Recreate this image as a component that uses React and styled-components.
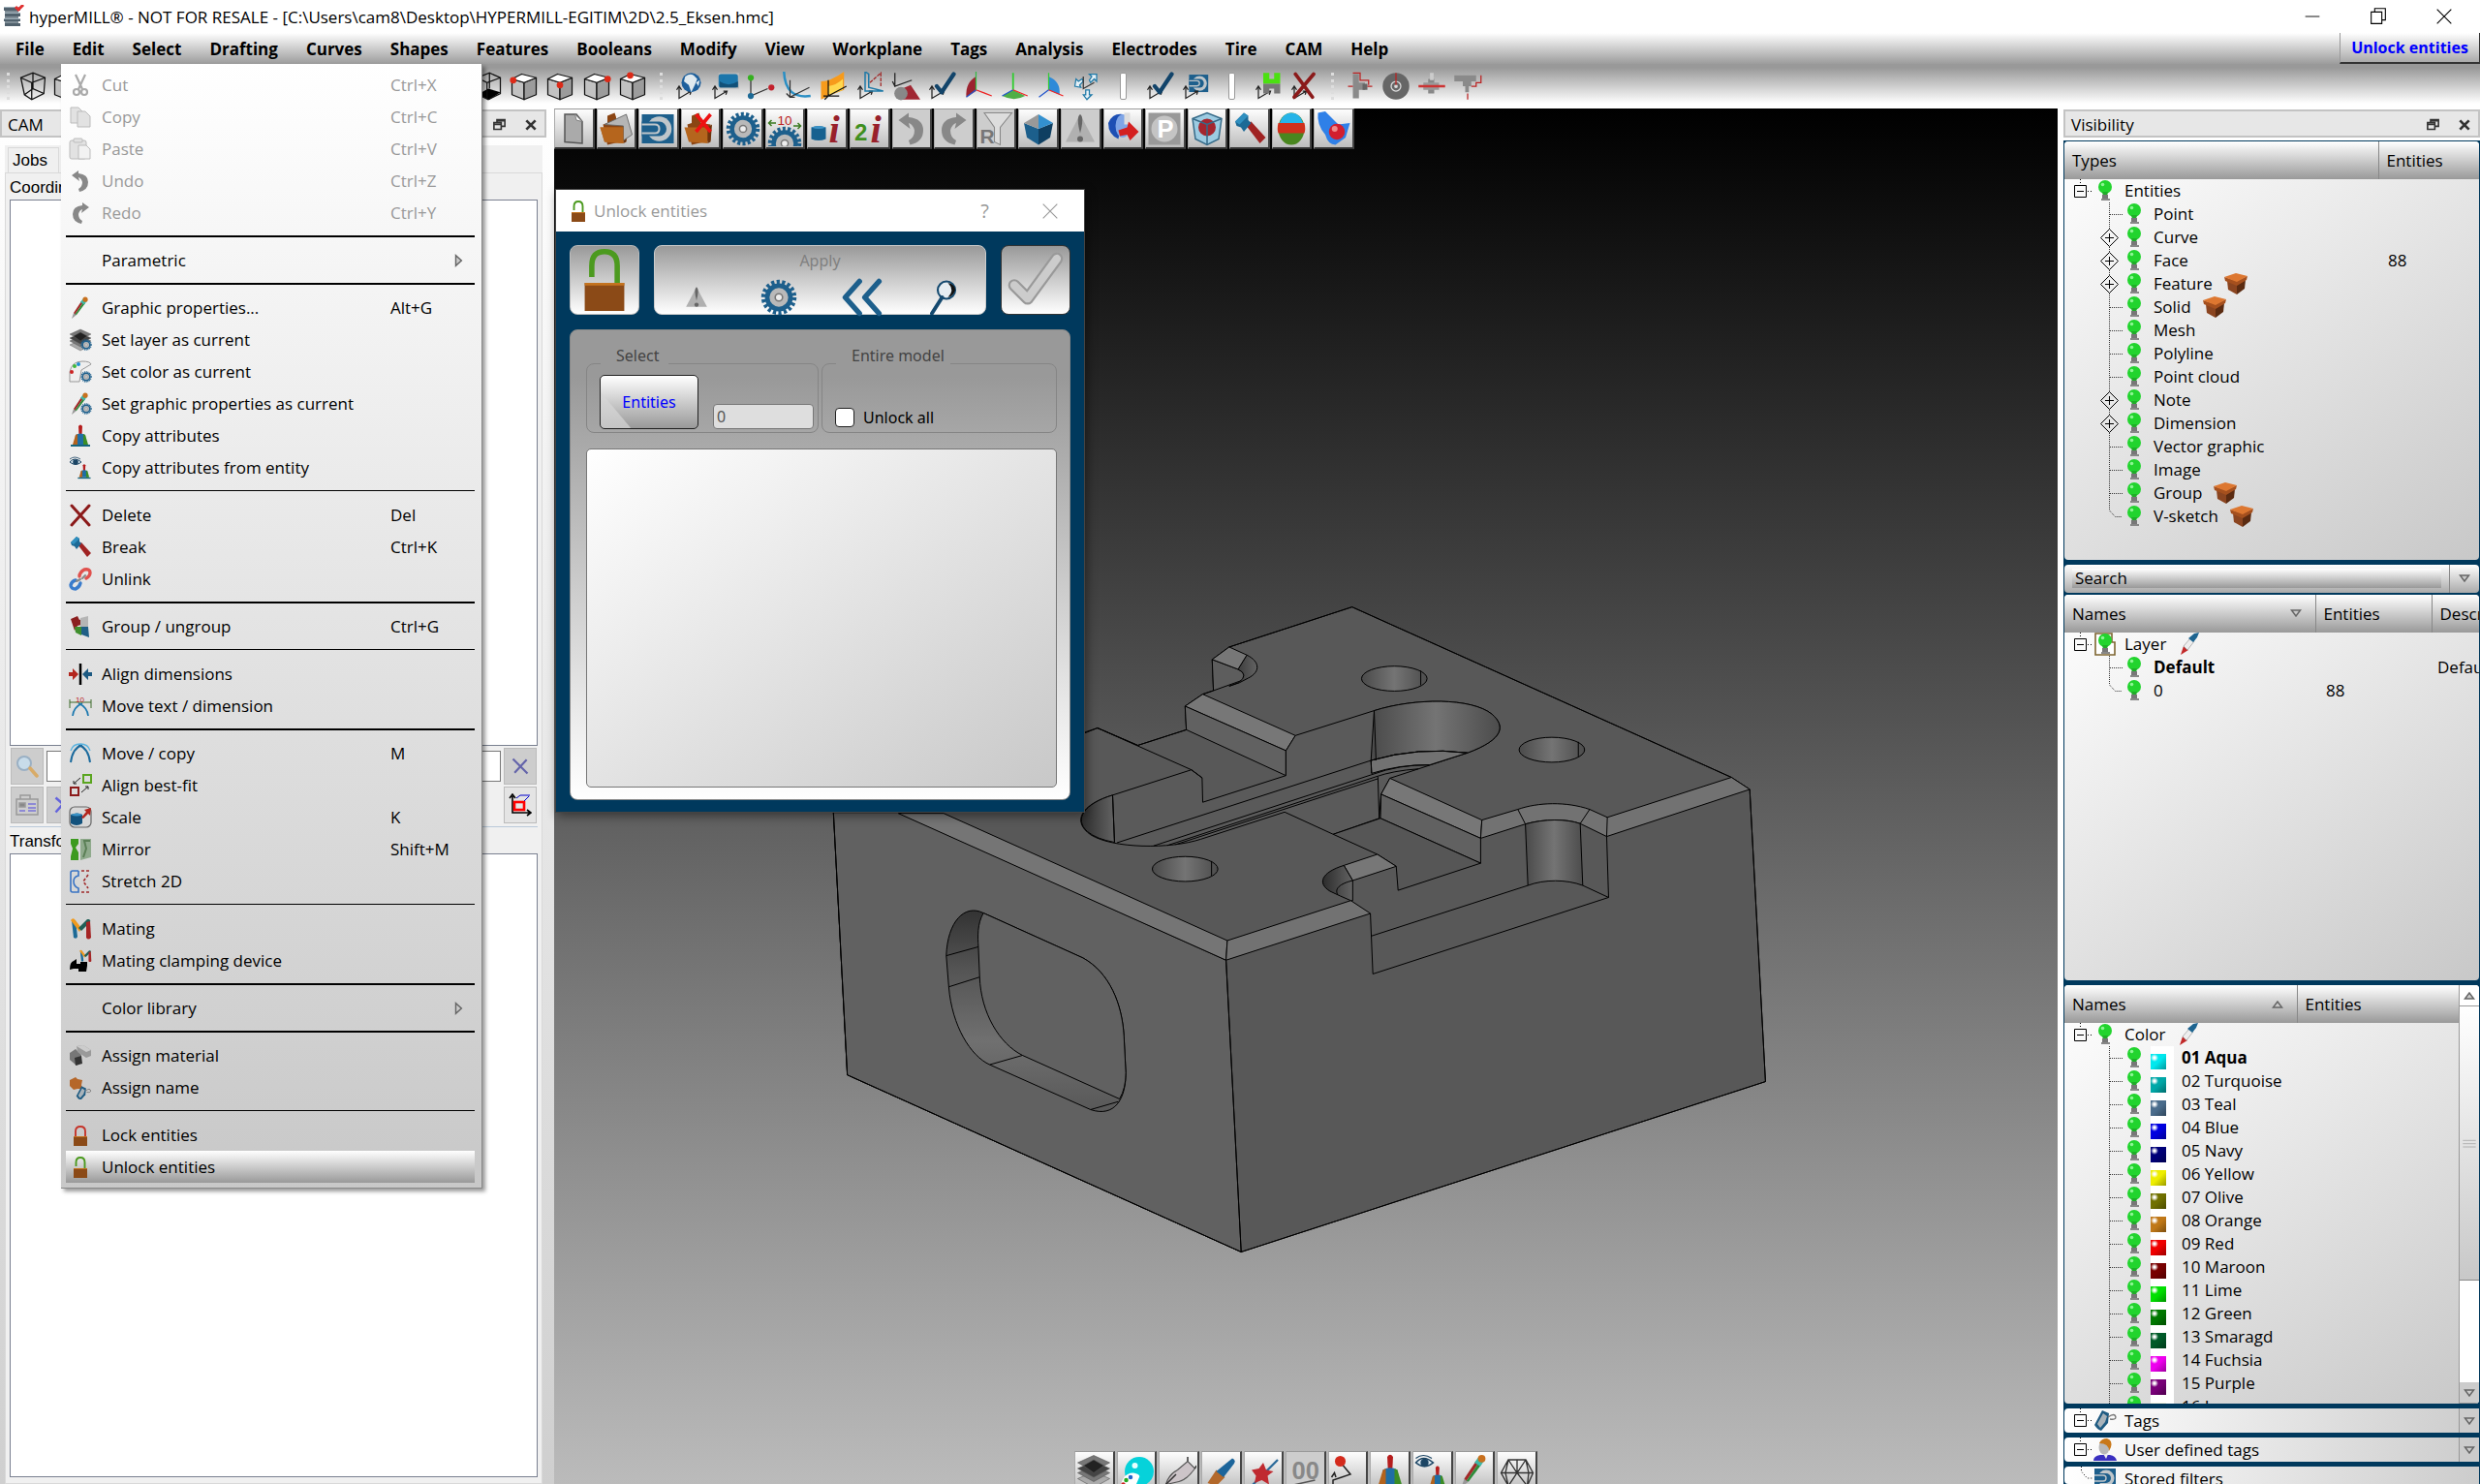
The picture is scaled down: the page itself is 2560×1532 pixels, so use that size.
import React from 'react';
import styled, { createGlobalStyle, css } from 'styled-components'

const uiFont = '"Open Sans", "Noto Sans", sans-serif'
const plainFont = '"Liberation Sans", Arial, sans-serif'
const navy = '#00395d'

const GlobalStyle = createGlobalStyle`
  * {
    box-sizing: border-box;
  }
  body {
    margin: 0;
    background: #fff;
    color: #000;
    font-family: ${uiFont};
    font-size: 17px;
    overflow: hidden;
  }
  button, input {
    font: inherit;
    color: inherit;
    margin: 0;
    padding: 0;
    border: 0;
    background: none;
  }
  svg {
    display: block;
    flex: none;
  }
`

const Page = styled.div`
  position: relative;
  height: 100vh;
  display: flex;
  flex-direction: column;
  overflow: hidden;
`

/* title bar, menu bar, top toolbar */
const TitleBar = styled.header`
  height: 34px;
  flex: none;
  display: flex;
  align-items: center;
  padding: 0 26px 0 2px;
  gap: 4px;
`
const WindowTitle = styled.h1`
  flex: 1;
  margin: 0;
  font-size: 17px;
  font-weight: 400;
`
const WindowButtons = styled.div`
  display: flex;
  gap: 46px;
`
const MenuBar = styled.nav`
  height: 32px;
  flex: none;
  display: flex;
  gap: 1px;
  background: linear-gradient(#fff, #9c9c9c);
  padding-left: 2px;
`
const MenuBarItem = styled.button`
  font-weight: 700;
  font-size: 17px;
  padding: 0 14px;
`
const CommandButton = styled.button`
  margin-left: auto;
  width: 145px;
  font-weight: 700;
  font-size: 16px;
  color: #00f;
  background: linear-gradient(#fff, #aaa);
  border-left: 1px solid #999;
  border-right: 1px solid #333;
  border-bottom: 2px solid #333;
`
const ToolBar = styled.div`
  height: 46px;
  flex: none;
  display: flex;
  align-items: center;
  background: linear-gradient(#999 4px, #fff 41px);
`
const ToolGroup = styled.div`
  display: grid;
  width: ${props => props.$width}px;
  grid-template-columns: repeat(${props => props.$count}, 1fr);
  justify-items: center;
  align-items: center;
`
const ToolButton = styled.button`
  display: flex;
`
const Grip = styled.div`
  width: 20px;
  display: flex;
  justify-content: center;
  &:first-child {
    width: 16px;
  }
  &::before {
    content: '';
    height: 28px;
    border-left: 3px dotted #ddd;
  }
`
const CoveredTools = styled.div`
  width: 398px;
`
const Bar = styled.div`
  width: 7px;
  height: 28px;
  border: 1px solid #999;
  border-radius: 2px;
  background: #fff;
`

const Workspace = styled.main`
  flex: 1;
  min-height: 0;
  display: grid;
  grid-template-columns: 572px minmax(0, 1fr) 436px;
`

/* docks */
const DockTitle = styled.div`
  height: 29px;
  flex: none;
  display: flex;
  align-items: center;
  gap: 18px;
  padding: 2px 7px 0 6px;
  background: #e7e7e7;
  border: 2px solid #c3c3c3;
  line-height: 22px;
`
const DockName = styled.h2`
  flex: 1;
  margin: 0;
  font-size: 17px;
  font-weight: 400;
`
const LeftDock = styled.aside`
  display: flex;
  flex-direction: column;
  min-height: 0;
  padding: 1px 8px 0 0;
  background: linear-gradient(#fff, #cfcfcf);
`
const TabBox = styled.div`
  flex: 1;
  min-height: 0;
  display: flex;
  flex-direction: column;
  margin: 8px 4px 0 5px;
  background: #f0f0f0;
  font-family: ${plainFont};
  font-size: 17px;
`
const Tab = styled.button`
  align-self: flex-start;
  width: 53px;
  height: 26px;
  margin: 2px 0 0 3px;
  padding-left: 4px;
  text-align: left;
  background: #f0f0f0;
  border: 1px solid #d9d9d9;
  border-bottom: 0;
`
const TabPane = styled.div`
  flex: 1;
  min-height: 0;
  display: flex;
  flex-direction: column;
  border: 1px solid #d9d9d9;
  padding: 2px 4px 6px;
`
const ListLabel = styled.label`
  height: 25px;
  line-height: 25px;
`
const ListBox = styled.div`
  flex: ${props => props.$share} 1 0;
  background: #fff;
  border: 1px solid #7a8090;
`
const FinderRow = styled.div`
  display: flex;
  gap: 3px;
  padding: 2px 1px 0;
`
const FinderInput = styled.input`
  flex: 1;
  margin: 3px 0;
  min-width: 0;
  background: #fff;
  border: 1px solid #777;
`
const FinderButton = styled.button`
  width: 34px;
  height: 38px;
  display: flex;
  align-items: center;
  justify-content: center;
  background: ${props => props.$active ? '#e4e4e4' : '#cdcdcd'};
  border: 1px solid #bbb;
  &:last-child {
    margin-left: auto;
  }
`
const Splitter = styled.div`
  height: 1px;
  margin: 3px 0 2px;
  background: #b9c9d9;
`

/* 3D view */
const View = styled.section`
  position: relative;
  display: flex;
  flex-direction: column;
  justify-content: space-between;
  background: linear-gradient(#000, #bbb);
  min-height: 0;
`
const ViewTools = styled.div`
  display: grid;
  grid-template-columns: repeat(${props => props.$count}, 1fr);
  gap: 2px;
  width: ${props => props.$width}px;
  ${props => props.$bottom && css`
    height: 34px;
    overflow: hidden;
    align-self: center;
  `}
`
const ViewButton = styled.button`
  height: 42px;
  min-width: 0;
  display: flex;
  align-items: center;
  justify-content: center;
  border: 1px solid;
  border-width: 1px 2px 2px 1px;
  border-color: #999 #444 #333 #aaa;
  background: ${props => props.$off ? '#cdcdcd' : 'linear-gradient(#fdfdfd, #bdbdbd)'};
`
const Model = styled.svg`
  position: absolute;
  left: 248px;
  top: 488px;
  width: 1020px;
  height: 720px;
  stroke: #000;
  stroke-width: 1;
  fill: none;
  & * {
    vector-effect: non-scaling-stroke;
  }
`

/* unlock entities window */
const Dialog = styled.section`
  position: absolute;
  left: 1px;
  top: 83px;
  width: 547px;
  border: 1px solid #444;
  background: ${navy};
  box-shadow: 2px 3px 10px rgba(0, 0, 0, 0.45);
`
const DialogTitle = styled.div`
  height: 43px;
  display: flex;
  align-items: center;
  gap: 4px;
  padding: 0 24px 0 11px;
  background: #fff;
  color: #999;
`
const DialogName = styled.h2`
  flex: 1;
  margin: 0;
  font-size: 17px;
  font-weight: 400;
`
const TitleButton = styled.button`
  display: flex;
  margin-left: 48px;
  font-size: 20px;
`
const DialogBody = styled.div`
  padding: 14px 14px 12px;
  display: flex;
  flex-direction: column;
  gap: 15px;
  font-family: "Noto Sans", sans-serif;
  font-size: 16px;
`
const DialogTop = styled.div`
  display: grid;
  grid-template-columns: 72px 1fr 72px;
  gap: 15px;
  height: 72px;
`
const RoundButton = styled.button`
  display: flex;
  align-items: center;
  justify-content: center;
  border: 1px solid ${props => props.$dark ? '#333' : '#bbb'};
  border-radius: 8px;
  background: linear-gradient(#999, #fff);
`
const ApplyBox = styled.div`
  border: 1px solid #ccc;
  border-radius: 8px;
  background: linear-gradient(#999, #fff);
  color: #808080;
  text-align: center;
  line-height: 31px;
`
const ApplyRow = styled.div`
  display: grid;
  grid-template-columns: repeat(4, 1fr);
  justify-items: center;
  align-items: center;
  height: 38px;
`
const Form = styled.div`
  border: 1px solid #888;
  border-radius: 8px;
  background: linear-gradient(#999 10%, #fff);
  padding: 16px 13px 12px 16px;
`
const Groups = styled.div`
  display: grid;
  grid-template-columns: 240px 1fr;
  gap: 3px;
`
const Group = styled.fieldset`
  position: relative;
  display: flex;
  align-items: flex-end;
  height: 90px;
  min-width: 0;
  margin: 0;
  padding: 0 5px 4px 14px;
  border: 0;
  gap: 15px;
  &::before {
    content: '';
    position: absolute;
    inset: 18px 0 0;
    border: 1px solid #858585;
    border-radius: 8px;
    pointer-events: none;
    clip-path: polygon(0 0, 15px 0, 15px 4px, ${props => props.$gapEnd}px 4px, ${props => props.$gapEnd}px 0, 100% 0, 100% 100%, 0 100%);
  }
`
const Legend = styled.legend`
  position: absolute;
  top: 0;
  left: 31px;
  padding: 0;
  line-height: 21px;
  color: #444;
`
const EntitiesButton = styled.button`
  width: 102px;
  height: 56px;
  color: #00f;
  border: 1px solid #222;
  border-radius: 5px;
  background: linear-gradient(50deg, rgba(215, 215, 215, 0.7) 21%, transparent 22%), linear-gradient(#fff, #999);
`
const CountInput = styled.input`
  flex: 1;
  min-width: 0;
  height: 26px;
  padding-left: 3px;
  color: #555;
  border: 1px solid #777;
  border-radius: 4px;
  background: #dedede;
`
const CheckLabel = styled.label`
  display: flex;
  align-items: center;
  gap: 9px;
  line-height: 24px;
`
const Check = styled.input`
  appearance: none;
  width: 20px;
  height: 20px;
  background: #fff;
  border: 1px solid #222;
  border-radius: 4px;
`
const Selection = styled.div`
  height: 350px;
  margin-top: 16px;
  border: 1px solid #777;
  border-radius: 5px;
  background: linear-gradient(145deg, #fff, #c8c8c8);
`

/* edit menu */
const Menu = styled.div`
  position: absolute;
  left: 63px;
  top: 66px;
  width: 435px;
  padding: 5px 7px 5px 5px;
  background: linear-gradient(#fff, #c8c8c8);
  border-right: 1px solid #888;
  border-bottom: 1px solid #888;
  box-shadow: 3px 3px 4px rgba(0, 0, 0, 0.4);
`
const MenuItem = styled.button`
  width: 100%;
  height: 33px;
  display: grid;
  grid-template-columns: 24px 308px 64px 1fr;
  align-items: center;
  padding-left: 3px;
  text-align: left;
  color: ${props => props.disabled ? '#999' : '#000'};
  background: ${props => props.$active ? 'linear-gradient(#fff, #999)' : 'none'};
`
const MenuText = styled.span`
  padding-left: 10px;
`
const MenuLine = styled.hr`
  height: ${props => props.$thin ? 1 : 2}px;
  margin: 7px 0 ${props => props.$thin ? 8 : 7}px;
  border: 0;
  background: #000;
`

/* visibility dock */
const RightDock = styled.aside`
  display: flex;
  flex-direction: column;
  min-height: 0;
  padding: 1px 0 0 6px;
`
const Panels = styled.div`
  flex: 1;
  min-height: 0;
  display: flex;
  flex-direction: column;
  gap: 5px;
  margin-top: 3px;
  padding: 1px 1px 0;
  background: ${navy};
`
const Panel = styled.div`
  flex: ${props => props.$share} 1 0;
  min-height: 0;
  display: flex;
  overflow: hidden;
  border-radius: 4px;
  background: linear-gradient(145deg, #fff, #c8c8c8);
`
const SearchGroup = styled.div`
  flex: 12 1 31px;
  min-height: 0;
  display: flex;
  flex-direction: column;
  gap: 2px;
`
const SearchRow = styled.div`
  height: 29px;
  flex: none;
  display: flex;
  align-items: center;
  padding-left: 8px;
  background: linear-gradient(#fff, #aaa);
  border-radius: 4px;
`
const SearchInput = styled.input`
  flex: 1;
  min-width: 0;
  height: 20px;
  padding-left: 3px;
  line-height: 20px;
  background: linear-gradient(#fff, #999);
`
const DropButton = styled.button`
  width: 31px;
  height: 100%;
  margin-left: 8px;
  display: flex;
  align-items: center;
  justify-content: center;
  border-left: 1px solid #888;
`
const Table = styled.table`
  flex: 1;
  width: 100%;
  align-self: flex-start;
  table-layout: fixed;
  border-collapse: collapse;
`
const Th = styled.th`
  width: ${props => props.$width ? props.$width + 'px' : 'auto'};
  height: 39px;
  padding: 0 14px 0 8px;
  font-weight: 400;
  text-align: left;
  white-space: nowrap;
  overflow: hidden;
  background: linear-gradient(#fff, #999);
  &:last-child {
    padding-right: 0;
  }
  & + & {
    border-left: 1px solid #888;
  }
`
const HeadCell = styled.div`
  display: flex;
  justify-content: space-between;
  align-items: center;
`
const Td = styled.td`
  height: 24px;
  padding: 0 0 0 ${props => props.$pad || 0}px;
  line-height: 24px;
  white-space: nowrap;
  overflow: hidden;
`
const TreeCell = styled.div`
  display: flex;
  align-items: center;
  height: 24px;
`
const TreeText = styled.span`
  padding: 0 12px 0 8px;
  font-weight: ${props => props.$bold ? 700 : 400};
`
const Swatch = styled.span`
  width: 24px;
  height: 24px;
  flex: none;
  margin-left: 5px;
  background: #fff;
  &::before {
    content: '';
    display: block;
    width: 16px;
    height: 16px;
    margin-top: 8px;
    background: radial-gradient(circle at 4px 4px, #fff 1px, transparent 4px),
      linear-gradient(135deg, ${props => props.$color} 50%, rgba(0, 0, 0, 0.35)) ${props => props.$color};
  }
`
const ScrollBar = styled.div`
  width: 21px;
  flex: none;
  display: flex;
  flex-direction: column;
  border-left: 1px solid #999;
  background: #fff;
`
const ScrollButton = styled.button`
  height: 22px;
  display: flex;
  align-items: center;
  justify-content: center;
  background: ${props => props.$down ? '#ccc' : '#fff'};
  border-bottom: 1px solid #999;
`
const ScrollTrack = styled.div`
  flex: 1;
`
const Thumb = styled.div`
  height: 73%;
  display: flex;
  align-items: center;
  justify-content: center;
  background: linear-gradient(#fff, #c8c8c8);
  border-bottom: 1px solid #888;
`
const FoldedRow = styled.div`
  height: ${props => props.$last ? 18 : 25}px;
  flex: none;
  overflow: hidden;
  display: flex;
  border-radius: 4px 0 0 4px;
  background: linear-gradient(100deg, #fff, #ccc);
  & > div {
    flex: 1;
  }
`
const FoldedButton = styled.button`
  width: 21px;
  display: flex;
  align-items: center;
  justify-content: center;
  background: #ccc;
  border-left: 1px solid #999;
`

const cube = (
  <g stroke="#111" strokeWidth="1" strokeLinejoin="round">
    <path d="M2 6v13l10 4V9z" fill="#c2c2c2" />
    <path d="M12 9v14l10-4V5z" fill="#9c9c9c" />
    <path d="M2 6l8-4 12 3-10 4z" fill="#fff" />
  </g>
)
const dotCube = (x, y) => <g>{cube}<circle cx={x} cy={y} r="2.700" fill="#dd2a18" /></g>
const axes = (
  <path d="M4 12v10l10-6M4 22v-9m-2 2l2-3 2 3m5 1l3 0-1 3" stroke="#222" fill="none" strokeWidth="1" />
)
const gear = (x, y, r, fill = '#1d5f8c') => (
  <g>
    <circle cx={x} cy={y} r={r} fill="none" stroke={fill} strokeWidth={r * 0.3} strokeDasharray={`${r * 0.2} ${r * 0.149}`} />
    <circle cx={x} cy={y} r={r * 0.76} fill="#b9b9b9" stroke={fill} strokeWidth={r * 0.3} />
    <circle cx={x} cy={y} r={r * 0.24} fill="#eee" stroke="#777" strokeWidth={r * 0.1} />
  </g>
)
const pencil = (
  <g>
    <path d="M3 23l2-6 3 2z" fill="#999" />
    <path d="M5 17l8-12 2 1-8.500 12.500z" fill="#a32a2a" />
    <path d="M6.500 18.500L15 6l2 1-9 12z" fill="#2e8b3a" />
    <path d="M12 6l2.500-3.500 4 2.500L16 8.500z" fill="#3fb8a8" />
    <circle cx="17" cy="3.200" r="2.600" fill="#c8701e" />
  </g>
)
const stamp = (
  <g>
    <path d="M10 2q2-3 4 0l-.5 9h-3z" fill="#b51d1d" />
    <path d="M7 11q5-3 10 0l1 10H6z" fill="#1f6ea5" />
    <path d="M7 11l2-1v11H4z" fill="#b3631d" />
    <path d="M17 11l-2-1v11h5z" fill="#3c8d25" />
    <path d="M2 21h20v2H2z" fill="#15657f" />
  </g>
)
const lock = (open) => (
  <g>
    <path d={open ? 'M7.500 11V7q0-5 4.500-5t4.500 5v6' : 'M7 13V8q0-5 5-5t5 5v5'} fill="none" stroke={open ? '#4c9a1f' : '#c5352b'} strokeWidth="1.900" />
    <path d="M5 13h14v10H5z" fill="#8b4a17" />
    <path d="M5 13h14v1H5z" fill="#c4731f" />
  </g>
)
const dbIcon = (
  <g>
    <path d="M1 2h22v20H1z" fill="#1d5f8c" />
    <circle cx="13" cy="12" r="8.500" fill="#bfc6ca" />
    <path d="M1 7h12a5 5 0 0 1 0 10H1z" fill="#1d5f8c" />
    <path d="M1 9h9q3 0 3 3t-3 3H1" fill="none" stroke="#bfc6ca" strokeWidth="1.400" />
  </g>
)
const folder = (
  <g>
    <path d="M3 9l3-1V3l5-2 1 3v4l7 1v11l-13 3z" fill="#8b4513" />
    <path d="M1 11h16v11l-13-1z" fill="#b5651d" />
    <path d="M17 11l3-2-1 12-2 1z" fill="#6d340d" />
  </g>
)
const hammer = (
  <g>
    <path d="M9 9l4-2 10 11-4 4z" fill="#a02323" />
    <path d="M2 7l6-6 3 2v3l2 2-5 6-2-3-3-1z" fill="#1d6a96" />
    <path d="M2 7l6-6 3 2-6 6z" fill="#2f8fbf" />
  </g>
)
const mating = (
  <g>
    <path d="M3 3l2 18q3 2 4-1L7 3z" fill="#1d6a96" />
    <path d="M2 3q2-3 4-1l7 9-2 4z" fill="#f09a1d" />
    <path d="M21 2q2 1 1 3l-9 9-3-3 9-9z" fill="#205f57" />
    <path d="M18 5l4-1 1 17q-3 3-5 0z" fill="#a52525" />
  </g>
)
const eye = (
  <g>
    <path d="M1 6q5-6 12 0-6 5-12 0z" fill="#dce8f0" stroke="#1c4564" strokeWidth="1" />
    <circle cx="7" cy="6" r="2.800" fill="#1c4564" />
    <path d="M1 3q5-4 11 0" fill="none" stroke="#1c4564" strokeWidth="0.800" />
  </g>
)
const check = <path d="M8 12l4 5L22 2" fill="none" stroke="#12446a" strokeWidth="3.400" strokeLinecap="round" strokeLinejoin="round" />
const cross = <path d="M3 2l18 20M21 2L3 22" stroke="#8b1a1a" strokeWidth="3" strokeLinecap="round" />
const arrowTurn = <path d="M3 6l7-5 0 3q10 1 10 9 0 8-9 10l-1-3q4-2 4-7-1-4-4-5l1 4z" fill="#888" />
const info = <text x="13" y="21" fontSize="27" fontStyle="italic" fontWeight="700" fill="#98202a" fontFamily="Liberation Serif">i</text>
const layers = (
  <g stroke="#555" strokeWidth="0.400">
    <path d="M12 12l11 5-11 6-11-6z" fill="#aaa" />
    <path d="M12 8l11 5-11 6-11-6z" fill="#777" />
    <path d="M12 5l11 5-11 6-11-6z" fill="#444" />
    <path d="M12 1l11 5-11 6L1 6z" fill="#777" />
    <path d="M12 4l7 4-7 5-7-5z" fill="#222" />
  </g>
)
const tagIcon = (
  <g>
    <path d="M1 17L9 2l7 3-1 10-7 8q-4-1-7-6z" fill="#1f5b82" />
    <path d="M4 16L10 5l4 3-2 6-5 6z" fill="#a9b3ba" />
    <path d="M15 9q7-5 8 0 0 3-6 2" fill="none" stroke="#777" strokeWidth="1.300" />
  </g>
)
const bulb = (
  <g>
    <circle cx="12" cy="8" r="7" fill="#22d42e" />
    <path d="M9 13h6l-1 4h-4z" fill="#1fae28" />
    <path d="M9 16h6v4H9z" fill="#777" />
    <path d="M8 20h9v2H8z" fill="#888" />
    <circle cx="9.500" cy="5.500" r="1.800" fill="#8cf592" />
  </g>
)

const icons = {
  app: <g><path d="M2 2h17v4H2zM3 8h16v4H3zM2 14h17v3H2zM3 19h16v3H3z" fill="#51616d" /><path d="M2 2h17v1H2zM3 8h16v1H3zM2 14h17v1H2z" fill="#9fb0ba" /><path d="M3 6h14v2H3zM3 12h14v2H3zM3 17h14v2H3z" fill="#7f8d96" /><path d="M14 2l3 3 5-5" fill="none" stroke="#e03030" strokeWidth="3" /></g>,
  wire: <g fill="none" stroke="#111" strokeWidth="1"><path d="M2 5l3 14 6 4 10-5 1-13-10-4zM2 5l9 4 11-4M11 9v14M12 1v13l9 4M12 14l-7 5" /></g>,
  solidCube: cube,
  floorCube: <g><path d="M3 19l9-5 10 3-9 6z" fill="#000" /><path d="M3 5l10-4 9 4v13l-10 5-8-4zM3 5l8 4 11-4M11 9v14M13 1v13" fill="none" stroke="#111" /></g>,
  cubeLeft: dotCube(3, 7),
  cubeMid: dotCube(12, 11),
  cubeRight: dotCube(21, 6),
  cubeTop: dotCube(10, 3),
  globe: <g>{axes}<circle cx="14" cy="9" r="8" fill="#1d5f9c" /><path d="M9 4q4-3 7-1l3 3-2 5-3 6-2-6-4-3zM18 9l3-2-1 5z" fill="#dfe9ef" /></g>,
  screen: <g>{axes}<rect x="7" y="1" width="17" height="13" fill="#bbb" /><rect x="7" y="2" width="16" height="11" rx="2" fill="#1b76ab" /><path d="M8 8q7 5 15 0v5H8z" fill="#115078" /></g>,
  points: <g><path d="M4 4v16l14-6" stroke="#333" fill="none" /><circle cx="4" cy="5" r="2.500" fill="#35b020" /><circle cx="21" cy="13" r="2.500" fill="#c3202c" /><circle cx="4" cy="20" r="2.500" fill="#1d6a96" /></g>,
  curve: <g><path d="M1 0q1 23 22 20" stroke="#2b8fc4" strokeWidth="2" fill="none" /><path d="M6 7v14l16-8M3 18l3 3h4" stroke="#333" fill="none" /></g>,
  orange: <g><path d="M2 8q8 0 19-8v15q-9 3-19 8z" fill="#f79b1c" /><path d="M8 12q7-1 12-6v9l-12 5z" fill="#ffd84f" /><path d="M8 7v13l15-8M5 23l4-4M4 20h13" stroke="#111" fill="none" /></g>,
  angle: <g>{axes}<path d="M8 0l3 2v11l12 3H8z" fill="none" stroke="#1f7aa8" strokeWidth="1.200" /><path d="M12 9l9-8v12" fill="none" stroke="#a02323" strokeDasharray="3 1" /></g>,
  cone: <g><path d="M3 1v11l14-5M3 12L1 8" stroke="#222" fill="none" /><path d="M9 14l7-3 8 12H9z" fill="#a02733" /><circle cx="8" cy="18" r="5.500" fill="#888" /></g>,
  checkAxes: <g>{axes}{check}</g>,
  planeRed: <g><path d="M10 4v12l-8 5q-1-12 8-17z" fill="#9c2430" /><path d="M10 15l13 5" stroke="#e22" /><path d="M10 15l-8 6" stroke="#25c" /><path d="M10 0v15" stroke="#3b4" /></g>,
  planeGreen: <g><path d="M2 20l9-5 10 5q-9 5-19 0z" fill="#4fae47" /><path d="M11 1v14" stroke="#3c3" strokeWidth="1.500" /><path d="M11 15l12 5" stroke="#e22" /><path d="M11 15l-9 5" stroke="#25c" /></g>,
  planeBlue: <g><path d="M10 4v11l9 4q1-11-9-15z" fill="#2e8ad8" /><path d="M10 1v14" stroke="#3c3" /><path d="M10 15l12 5" stroke="#e22" /><path d="M10 15l-8 6" stroke="#25c" /></g>,
  moveAxes: <g fill="#e8f2f8" stroke="#1f7aa8"><path d="M2 12l1-6 2 2 3-2 1 2-3 3 1 2zM14 2h6v6l-2-2-3 3-1-2 2-3zM11 15h3v4h2l-4 4-3-4h2z" /><path d="M9 4v10l9-5" stroke="#333" fill="none" /></g>,
  dbAxes: <g><g transform="translate(6 1) scale(.72)">{dbIcon}</g>{axes}</g>,
  save: <g>{axes}<path d="M8 1h5v5h4V1h5v9H8z" fill="#4be011" /><path d="M8 10h14v8h-5v-4h-4v4H8z" fill="#777" /></g>,
  delAxes: <g>{axes}<path d="M5 2l14 19M20 2L4 21" stroke="#8b1a1a" strokeWidth="3" strokeLinecap="round" /></g>,
  tire1: <g><path d="M6 2h5v7h5v6h-5v7H6z" fill="#8a8a8a" /><path d="M14 10h4v5h-4z" fill="#666" /><path d="M2 12h4M18 12h4M6 1h6v6h7v4" stroke="#b22" fill="none" /></g>,
  tire2: <g><circle cx="12" cy="12" r="11" fill="#666" /><circle cx="12" cy="12" r="4" fill="none" stroke="#ddd" /><circle cx="12" cy="12" r="1.500" fill="#ddd" /><path d="M12 1v10" stroke="#b22" /></g>,
  tire3: <g><path d="M9 6h5v12H9z" fill="#888" /><path d="M5 9h13v6H5z" fill="#999" /><path d="M1 12h22" stroke="#c33" strokeWidth="2" /><path d="M12 1v6" stroke="#ccc" strokeWidth="3" /></g>,
  tire4: <g><path d="M1 3h18v5h-4v4h-2v5h-3v-5H8V8H1z" fill="#8a8a8a" /><path d="M12 23v-5m3-6h4V9h4V3" stroke="#b22" fill="none" /></g>,
  cut: <g fill="none" stroke="#aaa" strokeWidth="2.200"><path d="M7 1l7 15M17 1l-7 15" /><circle cx="8" cy="19" r="3" /><circle cx="16" cy="19" r="3" /></g>,
  copy: <g fill="#e2e2e2" stroke="#bbb"><path d="M2 2h8l4 4v12H2z" /><path d="M9 6h8l5 5v11H9z" /></g>,
  paste: <g fill="#e2e2e2" stroke="#bbb"><rect x="1" y="3" width="17" height="19" rx="2" /><rect x="5" y="1" width="9" height="4" rx="1" /><path d="M10 8h8l4 4v10H10z" fill="#f2f2f2" /></g>,
  undo: arrowTurn,
  redo: <g transform="matrix(-1 0 0 1 24 0)">{arrowTurn}</g>,
  pencil,
  layerSet: <g>{layers}{gear(18, 17, 5)}</g>,
  colorSet: <g><path d="M1 22V12Q3 1 14 1q8 0 9 3l-10 6-2 12z" fill="#eee" stroke="#999" /><circle cx="6" cy="6" r="2" fill="#3fb83a" /><circle cx="10" cy="4" r="2" fill="#1f8fd0" /><circle cx="3" cy="12" r="2" fill="#c22" />{gear(18, 17, 5)}</g>,
  pencilSet: <g>{pencil}{gear(18, 17, 5)}</g>,
  stamp,
  eyeStamp: <g>{eye}<g transform="translate(8 8) scale(.66)">{stamp}</g></g>,
  cross,
  hammer,
  unlink: <g fill="none" strokeWidth="3.400" strokeLinecap="round"><path d="M11 9q0-4 5-7 6-1 6 3 0 4-4 6" stroke="#e0514d" /><path d="M12 16q-1 4-5 6-5 0-5-4 1-4 5-5" stroke="#3a7ccc" /><path d="M8 14l4-2M14 11l3-3" stroke="#888" strokeWidth="2" /></g>,
  group: <g><path d="M2 4l7-3 2 4 3-1-1 6-4 1-3 5z" fill="#8b1f1f" /><path d="M12 3l8-2 0 11h-8z" fill="#b5b5b5" /><path d="M6 12h7v9l-6-3z" fill="#3f8f2d" /><path d="M13 12h7l1 11-8-3z" fill="#1f5f86" /></g>,
  align: <g><path d="M12 1v22" stroke="#000" strokeWidth="2.500" /><path d="M0 10h4V6l6 6-6 6v-4H0z" fill="#b3261e" /><path d="M24 10h-4V6l-6 6 6 6v-4h4z" fill="#1d5a82" /></g>,
  moveDim: <g fill="none"><path d="M4 22q1-9 10-13M20 22q-1-9-10-13" stroke="#1f7ab0" strokeWidth="1.800" /><path d="M1 8h22M1 5v9M23 5v9" stroke="#3c6b2a" /><text x="7" y="8" fontSize="8" fill="#b22" fontFamily="Liberation Sans">10</text></g>,
  moveCopy: <g fill="none"><path d="M2 21Q4 6 14 3M22 21Q20 6 10 3" stroke="#1b6a9d" strokeWidth="2" /><path d="M2 9q2-7 10-7t10 7" stroke="#5cb4e0" strokeWidth="1.300" /></g>,
  bestFit: <g fill="none"><rect x="2" y="14" width="8" height="8" stroke="#8b1a1a" strokeWidth="2" /><rect x="15" y="1" width="8" height="8" stroke="#5aa51f" strokeWidth="2" /><path d="M12 4L5 10m0-3v3h3M13 19l7-6m-3 0h3v3" stroke="#222" /></g>,
  scale: <g><rect x="1" y="1" width="22" height="21" rx="5" fill="#d8d8d8" stroke="#666" strokeWidth="1.200" /><path d="M2 9q7-3 12 0v9q-6 4-12 0z" fill="#13527d" /><path d="M2 9q7-3 12 0-6 3-12 0z" fill="#3b93c7" /><path d="M13 12l5-6-2-2 7-2-1 8-2-2-5 5z" fill="#b3261e" /></g>,
  mirror: <g><path d="M2 1h8v5l-3 4 3 5v8H2v-4l2-8-2-5z" fill="#3c9a1f" /><path d="M12 1v22l11-3V1z" fill="#8faa8c" /><path d="M22 3h-6l2 8-3 9" fill="none" stroke="#5b7f56" strokeWidth="2" /></g>,
  stretch: <g fill="none" strokeWidth="1.600"><path d="M10 1H4Q2 1 2 3v18q0 2 2 2h6v-4q-5-2-5-7t5-6V1" stroke="#3a74c4" /><path d="M13 1h9M13 23h9M20 5l-5 7 5 7" stroke="#a02b2b" strokeDasharray="3 2" /></g>,
  mating,
  clamp: <g><path d="M1 21q0-8 4-9l3-2v5h4v-2h7v4l-1 6h-8v-3H5z" fill="#000" /><g transform="translate(10 0) scale(.58)">{mating}</g></g>,
  material: <g><path d="M1 9l6-4 6 6v8l-5 3-7-6z" fill="#777" /><path d="M8 2l7-1 8 5v6l-5 2-9-6z" fill="#9a9a9a" /><path d="M8 2l7-1 8 5-5 2z" fill="#ccc" /><path d="M6 14l7-2 1 8-7 2z" fill="#333" /></g>,
  assignName: <g><path d="M1 4l6-3 2 2 5 1-1 5 1 4-5 0-4 1-4-4z" fill="#b5672a" /><g transform="translate(7 9) scale(.68)">{tagIcon}</g></g>,
  lock: lock(false),
  unlock: lock(true),
  newFile: <g><path d="M6 2h8l4 5v15l-12-1z" fill="#aaa" stroke="#555" /><path d="M13 2l1 4 4 1z" fill="#fff" stroke="#777" strokeWidth="0.600" /></g>,
  open: <g>{folder}<path d="M4 9L19 2l4 14-6 4V10z" fill="#b5b5b5" stroke="#666" strokeWidth="0.600" /><path d="M1 11h16v11l-13-1z" fill="#b5651d" /></g>,
  db: dbIcon,
  close: <g>{folder}<path d="M9 2l10 12M19 2L9 14" stroke="#e11" strokeWidth="2.400" /></g>,
  gear: gear(12, 12, 10),
  gear10: <g>{gear(12, 22, 10)}<text x="7" y="9" fontSize="9" fill="#b22" fontFamily="Liberation Sans">10</text><path d="M1 8h5m-3-2l-2 2 2 2M23 10h-5m3-2l2 2-2 2" stroke="#3a7a20" fill="none" /></g>,
  cubeInfo: <g><path d="M1 11q5-2 10 0v8q-5 2-10 0z" fill="#17618f" /><path d="M1 11q5-2 10 0-5 2-10 0z" fill="#3c94c8" />{info}</g>,
  info2: <g><text x="2" y="20" fontSize="16" fontWeight="700" fill="#3f8f1f" fontFamily="Liberation Sans">2</text>{info}</g>,
  filterR: <g><path d="M4 1h19l-8 10v12l-4-2V11z" fill="#ddd" stroke="#888" strokeWidth="0.700" /><text x="1" y="22" fontSize="14" fontWeight="700" fill="#777" fontFamily="Liberation Sans">R</text></g>,
  box: <g><path d="M2 8l10 4v11L4 18z" fill="#1c5f8c" /><path d="M22 8l-10 4v11l8-5z" fill="#0f3f61" /><path d="M2 8l10-6v10z" fill="#999" /><path d="M12 2l10 6-10 4z" fill="#3390cf" /></g>,
  warn: <g><path d="M12 2l10 19H2z" fill="#b0b0b0" /><path d="M12 2q3 2 0 13-3-11 0-13z" fill="#666" /><circle cx="12" cy="19" r="2" fill="#666" /></g>,
  extrude: <g><path d="M2 8Q5 1 12 2l-3 17q-7-3-7-11z" fill="#1d4fb4" /><ellipse cx="12" cy="10" rx="5" ry="8" fill="#7fa5e6" /><path d="M13 1h4v8h-4z" fill="#ddd" /><path d="M9 13l6-2 1-4 7 7-6 6-2-4-5 1z" fill="#d42020" /></g>,
  park: <g><rect x="1" y="1" width="22" height="22" fill="#999" /><circle cx="12" cy="12" r="9" fill="#c4c4c4" /><text x="7" y="18" fontSize="17" fontWeight="700" fill="#fff" fontFamily="Liberation Sans">P</text></g>,
  cage: <g><path d="M2 5l10-4 10 4-2 14-8 4-8-4z" fill="#9ccbe2" stroke="#356a88" /><circle cx="12" cy="11" r="6" fill="#a3262f" /><path d="M2 5l10 4 10-4M12 9v14" fill="none" stroke="#356a88" /></g>,
  egg: <g><ellipse cx="12" cy="12" rx="9" ry="11" fill="#49861f" /><path d="M4 8q2-7 8-7t8 7z" fill="#26b4e8" /><path d="M3 8h18q1 4 0 7H3q-1-3 0-7z" fill="#d0301c" /></g>,
  pocket: <g><path d="M1 1l5-1 9 9 8-1-3 10-7 5q-5 0-7-7-6-7-5-15z" fill="#2f80e8" /><circle cx="14" cy="14" r="5.500" fill="#d21f2f" /><circle cx="12.500" cy="12" r="2" fill="#f08a8a" /></g>,
  layers,
  sphere: <g><circle cx="14" cy="12" r="10" fill="#06d2da" /><circle cx="11" cy="8" r="2" fill="#e7ffff" /><path d="M1 22q2-9 9-9 5 1 4 3l-3 7H1z" fill="#fff" /><circle cx="5" cy="18" r="1.500" fill="#2a2" /><circle cx="8" cy="16" r="1.500" fill="#26c" /><circle cx="3" cy="21" r="1.500" fill="#c22" /></g>,
  nib: <g><path d="M3 21q2-7 8-10l7-6 5 5q-6 8-11 9z" fill="#ccc4c8" stroke="#555" strokeWidth="0.800" /><path d="M3 21l7-7M18 5V2M23 10l1-2M2 22h20" stroke="#333" fill="none" /></g>,
  brush: <g><path d="M3 20l6-9 6 5-6 6z" fill="#b3682a" /><path d="M9 12l11-9q3 1 1 4l-7 9z" fill="#1c659b" /><path d="M2 22h20" stroke="#111" strokeWidth="1.400" /></g>,
  star: <g><path d="M4 22L22 4" stroke="#2b6b9a" strokeWidth="1.500" /><path d="M12 6l2 5 5 1-4 3 1 6-5-3-5 2 1-5-3-4 5-1z" fill="#c02a30" /></g>,
  digits: <g><text x="3" y="17" fontSize="17" fontWeight="700" fill="#888" fontFamily="Liberation Sans">00</text><path d="M1 22l18-4" stroke="#555" /></g>,
  robot: <g><circle cx="7" cy="5" r="3.700" fill="#d42a1c" /><path d="M9 8l5 6-12 4v5M1 16l2-3 1 3" fill="none" stroke="#222" /></g>,
  mesh: <path d="M6 4h12l5 9-4 9H6l-5-9zM6 4l6 9 6-9M1 13h22M6 22l6-9 7 9M6 4L4 13l2 9M18 4l2 9-1 9M12 4v9" fill="none" stroke="#333" strokeWidth="0.900" />,
  bulb,
  bulbTag: <g><path d="M2 1h17v9h3v13H2z" fill="#fff" stroke="#7d6530" strokeWidth="1.600" />{bulb}</g>,
  brick: <g><path d="M3 9l10 4v10l-9-5z" fill="#8b4520" /><path d="M22 8l-9 5v10l8-6z" fill="#5b2b11" /><path d="M0 5l1 4 12 5 10-6 1-4-11 5z" fill="#a5501e" /><path d="M0 5l12-4 12 3-11 6z" fill="#dd7730" /></g>,
  dropper: <g><path d="M3 23l3-9 5 4z" fill="#c22a2a" /><path d="M6 14l7-8 4 3-7 9z" fill="#eee" stroke="#999" strokeWidth="0.700" /><path d="M11 6l6-5 5-1-2 5-4 5z" fill="#1d6490" /></g>,
  tag: tagIcon,
  user: <g><path d="M0 24q0-5 7-6h10q6 1 7 6z" fill="#3a2fc0" /><path d="M9 15h7l-3 7z" fill="#eee" /><ellipse cx="11" cy="10" rx="5.500" ry="7.500" fill="#b9b9b9" /><path d="M6 6q2-5 8-5 6 2 4 9l-2 4q0-8-10-8z" fill="#c97819" /></g>,
  lens: <g><circle cx="14" cy="7" r="6" fill="#e5edf2" stroke="#14496f" strokeWidth="1.400" /><path d="M15 2q5 5 0 10 4-1 5-5 0-4-5-5z" fill="#111" /><path d="M11 12L4 23" stroke="#14496f" strokeWidth="2.600" strokeLinecap="round" /></g>,
  chevrons: <path d="M11 3L3 12l8 9M22 3l-8 9 8 9" fill="none" stroke="#1d5f8c" strokeWidth="3" strokeLinecap="round" strokeLinejoin="round" />,
  bigCheck: <g fill="none" strokeLinecap="round" strokeLinejoin="round"><path d="M4 14l5 5L20 4" stroke="#999" strokeWidth="4.600" /><path d="M4 14l5 5L20 4" stroke="#ccc" strokeWidth="3" /></g>,
  find: <g><circle cx="9" cy="9" r="7" fill="#c8dcea" stroke="#9ab0c4" strokeWidth="2" /><path d="M15 14l7 8" stroke="#d8ab68" strokeWidth="3.500" strokeLinecap="round" /></g>,
  findOff: <path d="M3 3l18 18M20 4L5 20" stroke="#6464aa" strokeWidth="2.600" />,
  props: <g fill="none" stroke="#999" strokeWidth="1.500"><path d="M1 6h22v16H1zM5 6V2h10v4" /><path d="M4 10h6v4H4z" fill="#888" /><path d="M13 11h8M13 15h8M4 18h6M13 18h8" stroke="#7a74d8" /></g>,
  bolt: <path d="M3 3l9 8-9 10" fill="none" stroke="#6464dd" strokeWidth="3" />,
  frame: <g fill="none"><path d="M4 3v17h18M1 5l3-4 3 4M19 17l4 3-4 3" stroke="#000" strokeWidth="1.600" /><rect x="6" y="9" width="10" height="8" stroke="red" strokeWidth="2.600" /><path d="M8 5l4-3h10M16 8l5-5" stroke="#00c" /></g>,
  minimize: <path d="M4 12h16" stroke="#000" />,
  restore: <path d="M4 7h12v13H4zM8 7V3h12v13h-4" fill="none" stroke="#000" strokeWidth="1.200" />,
  shut: <path d="M4 4l16 16M20 4L4 20" stroke="currentColor" strokeWidth="1.200" />,
  float: <path d="M3 9h12v11H3zM3 12h12M8 9V4h13v11h-6M8 6h13" fill="none" stroke="#333" strokeWidth="2.600" />,
  dockX: <path d="M4 4l16 16M20 4L4 20" stroke="#333" strokeWidth="4.600" />,
  down2: <path d="M3 6h18l-9 12z" fill="#ccc" stroke="#666" strokeWidth="3" />,
  up2: <path d="M3 18h18L12 6z" fill="#ccc" stroke="#666" strokeWidth="3" />,
  right2: <path d="M6 3v18l10-9z" fill="#ccc" stroke="#666" strokeWidth="2.500" />,
  grip3: <path d="M2 8h20M2 13h20M2 18h20" stroke="#999" />,
}

const Icon = ({ name, size = 24 }) => (
  <svg width={size} height={size} viewBox="0 0 24 24" aria-hidden="true">{icons[name]}</svg>
)

const menuNames = ['File', 'Edit', 'Select', 'Drafting', 'Curves', 'Shapes', 'Features', 'Booleans', 'Modify', 'View', 'Workplane', 'Tags', 'Analysis', 'Electrodes', 'Tire', 'CAM', 'Help']

const workplaneTools = ['globe', 'screen', 'points', 'curve', 'orange', 'angle', 'cone', 'checkAxes', 'planeRed', 'planeGreen', 'planeBlue', 'moveAxes', 'bar', 'checkAxes', 'dbAxes', 'bar', 'save', 'delAxes']

const viewTools = ['newFile', 'open', 'db', 'close', 'gear', 'gear10', 'cubeInfo', 'info2', 'undo', 'redo', 'filterR', 'box', 'warn', 'extrude', 'park', 'cage', 'hammer', 'egg', 'pocket']
const viewToolsOff = ['undo', 'redo', 'filterR', 'warn']
const attributeTools = ['layers', 'sphere', 'nib', 'brush', 'star', 'digits', 'robot', 'stamp', 'eyeStamp', 'pencil', 'mesh']

const editMenu = [
  { text: 'Cut', icon: 'cut', keys: 'Ctrl+X', disabled: true },
  { text: 'Copy', icon: 'copy', keys: 'Ctrl+C', disabled: true },
  { text: 'Paste', icon: 'paste', keys: 'Ctrl+V', disabled: true },
  { text: 'Undo', icon: 'undo', keys: 'Ctrl+Z', disabled: true },
  { text: 'Redo', icon: 'redo', keys: 'Ctrl+Y', disabled: true },
  { line: true },
  { text: 'Parametric', sub: true },
  { line: true },
  { text: 'Graphic properties...', icon: 'pencil', keys: 'Alt+G' },
  { text: 'Set layer as current', icon: 'layerSet' },
  { text: 'Set color as current', icon: 'colorSet' },
  { text: 'Set graphic properties as current', icon: 'pencilSet' },
  { text: 'Copy attributes', icon: 'stamp' },
  { text: 'Copy attributes from entity', icon: 'eyeStamp' },
  { line: true, thin: true },
  { text: 'Delete', icon: 'cross', keys: 'Del' },
  { text: 'Break', icon: 'hammer', keys: 'Ctrl+K' },
  { text: 'Unlink', icon: 'unlink' },
  { line: true },
  { text: 'Group / ungroup', icon: 'group', keys: 'Ctrl+G' },
  { line: true, thin: true },
  { text: 'Align dimensions', icon: 'align' },
  { text: 'Move text / dimension', icon: 'moveDim' },
  { line: true },
  { text: 'Move / copy', icon: 'moveCopy', keys: 'M' },
  { text: 'Align best-fit', icon: 'bestFit' },
  { text: 'Scale', icon: 'scale', keys: 'K' },
  { text: 'Mirror', icon: 'mirror', keys: 'Shift+M' },
  { text: 'Stretch 2D', icon: 'stretch' },
  { line: true, thin: true },
  { text: 'Mating', icon: 'mating' },
  { text: 'Mating clamping device', icon: 'clamp' },
  { line: true },
  { text: 'Color library', sub: true },
  { line: true },
  { text: 'Assign material', icon: 'material' },
  { text: 'Assign name', icon: 'assignName' },
  { line: true, thin: true },
  { text: 'Lock entities', icon: 'lock' },
  { text: 'Unlock entities', icon: 'unlock', active: true },
]

const types = [
  { text: 'Point' },
  { text: 'Curve', more: true },
  { text: 'Face', more: true, count: 88 },
  { text: 'Feature', more: true, brick: true },
  { text: 'Solid', brick: true },
  { text: 'Mesh' },
  { text: 'Polyline' },
  { text: 'Point cloud' },
  { text: 'Note', more: true },
  { text: 'Dimension', more: true },
  { text: 'Vector graphic' },
  { text: 'Image' },
  { text: 'Group', brick: true },
  { text: 'V-sketch', brick: true },
]

const colors = [
  ['01 Aqua', '#00e8ee'], ['02 Turquoise', '#00a8a8'], ['03 Teal', '#4a6c8c'], ['04 Blue', '#0000e0'],
  ['05 Navy', '#000078'], ['06 Yellow', '#eeee00'], ['07 Olive', '#707000'], ['08 Orange', '#c07818'],
  ['09 Red', '#f00000'], ['10 Maroon', '#780000'], ['11 Lime', '#00e000'], ['12 Green', '#007800'],
  ['13 Smaragd', '#005a28'], ['14 Fuchsia', '#ee00ee'], ['15 Purple', '#780078'], ['16 Ivory', '#f4f4e0'],
]

const RootGuide = ({ end }) => (
  <svg width="30" height="24" fill="none" stroke="#000">
    {end
      ? <path d="M17.500 0v5l6 7h6" strokeDasharray="1 2" />
      : <><path d="M16.500 0v5M24 12.500h5" strokeDasharray="1 2" /><path d="M10.500 6.500h12v12h-12zM13 12.500h7" /></>}
  </svg>
)

const ChildGuide = ({ more, last }) => (
  <svg width="60" height="24" fill="none" stroke="#333">
    {last
      ? <path d="M46.500 0v6l6 6.500h7" strokeDasharray="1 1" />
      : <path d={more ? 'M46.500 0v3M46.500 22v2' : 'M46.500 0v24M47 12.500h13'} strokeDasharray="1 1" />}
    {more && <path d="M46.500 3.500l9 9-9 9-9-9zM42 12.500h9M46.500 8v9" stroke="#000" />}
  </svg>
)

const RootRow = ({ text, icon, current }) => (
  <TreeCell>
    <RootGuide />
    <Icon name={current ? 'bulbTag' : 'bulb'} />
    <TreeText>{text}</TreeText>
    {icon && <Icon name={icon} />}
  </TreeCell>
)

const ChildRow = ({ text, more, last, bold, brick, color }) => (
  <TreeCell>
    <ChildGuide more={more} last={last} />
    <Icon name="bulb" />
    {color && <Swatch $color={color} />}
    <TreeText $bold={bold}>{text}</TreeText>
    {brick && <Icon name="brick" />}
  </TreeCell>
)

const Block = () => (
  <Model viewBox="0 0 1568 1568" preserveAspectRatio="none" role="img" aria-label="Model">
    <defs>
      <linearGradient id="round"><stop offset="0" stopColor="#4a4a4a" /><stop offset="0.5" stopColor="#747474" /><stop offset="1" stopColor="#4c4c4c" /></linearGradient>
      <linearGradient id="dark"><stop offset="0" stopColor="#2c2c2c" /><stop offset="1" stopColor="#636363" /></linearGradient>
      <linearGradient id="rim" x2="0" y2="1"><stop offset="0" stopColor="#333" /><stop offset="0.3" stopColor="#555" /><stop offset="0.65" stopColor="#707070" /><stop offset="1" stopColor="#585858" /></linearGradient>
    </defs>
    <path d="M885 58L1487 441 1516 468 1541 1125 709 1508 84 1110 62 520V500L460 342 481 330 545 369 622 334 620 281 648 254 665 246 663 176 690 148z" fill="#585858" />
    <path d="M62 520H165L685 852 709 1508 84 1110z" fill="#616161" />
    <path d="M165 522L685 852 687 808 237 522z" fill="#757575" />
    <path d="M687 808L883 718 914 747 685 852z" fill="#727272" />

    <path d="M663 176L704 198Q718 206 712 222L665 246z" fill="#5d5d5d" />
    <path d="M718 166C738 180 741 203 720 218Q708 229 690 236L705 228Q722 210 704 198z" fill="url(#dark)" />
    <path d="M690 148L718 166 704 198 663 176z" fill="#777" />
    <path d="M648 254L795 347 780 381 620 281z" fill="#777" />
    <path d="M620 281L780 381V437L622 334z" fill="#616161" />

    <path d="M795 347L920 291C985 262 1075 262 1107 299C1128 325 1127 355 1068 386L945 443 931 479 928 533 855 569 778 519 645 580C595 603 505 601 470 570C440 540 455 502 505 481L630 424 647 442 648 497 780 437V381z" fill="#5a5a5a" />
    <path d="M920 291C985 262 1075 262 1107 299C1128 325 1127 355 1068 386Q990 372 915 403z" fill="url(#round)" />
    <path d="M915 403Q990 372 1068 386L1008 413Q960 412 916 432z" fill="#727272" />
    <path d="M505 481L508 587Q480 580 465 563C443 535 460 500 505 481z" fill="url(#dark)" />
    <path d="M920 291L923 403M505 481L508 587M512 588L915 403Q990 372 1068 386M915 403L916 432M570 595L916 435Q960 412 1008 413M592 594L922 440Q950 426 990 422M605 592L926 444M926 440L928 533M931 479L932 533" />

    <path d="M945 443L1091 537 1089 578 931 479z" fill="#777" />
    <path d="M931 479L1089 578V634L930 533z" fill="#616161" />
    <path d="M855 569L930 533 1089 634 958 695 955 641 925 614z" fill="#565656" />
    <path d="M872 639L925 614 955 641 886 673z" fill="#777" />
    <path d="M872 639C835 655 830 680 850 697Q866 708 883 718L886 718V673z" fill="url(#dark)" />
    <path d="M886 673C865 680 857 692 862 704" />
    <path d="M1091 537L1148 513C1180 497 1225 495 1262 513L1290 531 1487 441 1516 468 1289 574 1247 545C1225 534 1190 534 1160 546L1089 578z" fill="#727272" />
    <path d="M1148 513L1160 546M1262 513L1247 545M1290 531L1289 574 1292 711" />
    <path d="M1160 546C1190 534 1225 534 1247 545L1251 684C1225 670 1190 670 1164 684z" fill="url(#round)" />
    <path d="M1251 684L1292 711 918 883 914 747M1164 684L915 798" />

    <path d="M885 58L690 148M665 246L648 254M622 334L545 369 481 330 460 340M481 330L630 424 647 442M885 58L1487 441M1516 468L1541 1125 709 1508 84 1110 62 520M685 852L709 1508" />

    <ellipse cx="952" cy="219" rx="52" ry="28" fill="url(#round)" />
    <ellipse cx="1202" cy="379" rx="52" ry="28" fill="url(#round)" />
    <ellipse cx="620" cy="647" rx="52" ry="28" fill="url(#round)" />
    <path d="M994 201V234M1244 361V394M662 629V662" />

    <path d="M300 746C270 725 243 765 241 842L245 912C250 1000 280 1068 310 1087L470 1188C508 1206 526 1165 526 1105L523 1022C520 950 500 880 458 847z" fill="url(#rim)" />
    <path d="M300 746C290 770 291 800 292 822L294 890C296 970 325 1040 362 1066L516 1164Q526 1140 526 1105L523 1022C520 950 500 880 458 847z" fill="#616161" />
    <path d="M241 842L292 822M245 912L294 890M310 1087L362 1066M470 1188L514 1170" />
  </Model>
)

const UnlockDialog = () => (
  <Dialog role="dialog" aria-label="Unlock entities">
    <DialogTitle>
      <Icon name="unlock" />
      <DialogName>Unlock entities</DialogName>
      <TitleButton aria-label="Help">?</TitleButton>
      <TitleButton aria-label="Close"><Icon name="shut" size={22} /></TitleButton>
    </DialogTitle>
    <DialogBody>
      <DialogTop>
        <RoundButton aria-label="Unlock"><Icon name="unlock" size={70} /></RoundButton>
        <ApplyBox>
          Apply
          <ApplyRow>
            <Icon name="warn" size={26} />
            <Icon name="gear" size={38} />
            <Icon name="chevrons" size={44} />
            <Icon name="lens" size={36} />
          </ApplyRow>
        </ApplyBox>
        <RoundButton $dark aria-label="OK"><Icon name="bigCheck" size={66} /></RoundButton>
      </DialogTop>
      <Form>
        <Groups>
          <Group $gapEnd={85}>
            <Legend>Select</Legend>
            <EntitiesButton>Entities</EntitiesButton>
            <CountInput aria-label="Selected entities" defaultValue="0" />
          </Group>
          <Group $gapEnd={133}>
            <Legend>Entire model</Legend>
            <CheckLabel><Check type="checkbox" />Unlock all</CheckLabel>
          </Group>
        </Groups>
        <Selection />
      </Form>
    </DialogBody>
  </Dialog>
)

const EditMenu = () => (
  <Menu role="menu">
    {editMenu.map((item, index) => item.line
      ? <MenuLine key={index} $thin={item.thin} />
      : (
        <MenuItem key={index} role="menuitem" disabled={item.disabled} $active={item.active}>
          {item.icon ? <Icon name={item.icon} /> : <span />}
          <MenuText>{item.text}</MenuText>
          <span>{item.keys}</span>
          {item.sub && <Icon name="right2" size={14} />}
        </MenuItem>
      ))}
  </Menu>
)

const CamDock = () => (
  <LeftDock>
    <DockTitle>
      <DockName>CAM</DockName>
      <ToolButton aria-label="Float"><Icon name="float" size={15} /></ToolButton>
      <ToolButton aria-label="Close"><Icon name="dockX" size={14} /></ToolButton>
    </DockTitle>
    <TabBox>
      <Tab>Jobs</Tab>
      <TabPane>
        <ListLabel>Coordinates</ListLabel>
        <ListBox $share={7} />
        <FinderRow>
          <FinderButton aria-label="Find"><Icon name="find" /></FinderButton>
          <FinderInput aria-label="Find text" />
          <FinderButton aria-label="Clear"><Icon name="findOff" size={20} /></FinderButton>
        </FinderRow>
        <FinderRow>
          <FinderButton aria-label="Properties"><Icon name="props" /></FinderButton>
          <FinderButton aria-label="Next"><Icon name="bolt" size={20} /></FinderButton>
          <FinderButton $active aria-label="Frame"><Icon name="frame" /></FinderButton>
        </FinderRow>
        <Splitter />
        <ListLabel>Transform</ListLabel>
        <ListBox $share={8} />
      </TabPane>
    </TabBox>
  </LeftDock>
)

const VisibilityDock = () => (
  <RightDock>
    <DockTitle>
      <DockName>Visibility</DockName>
      <ToolButton aria-label="Float"><Icon name="float" size={15} /></ToolButton>
      <ToolButton aria-label="Close"><Icon name="dockX" size={14} /></ToolButton>
    </DockTitle>
    <Panels>
      <Panel $share={13}>
        <Table>
          <thead>
            <tr><Th $width={324}>Types</Th><Th>Entities</Th></tr>
          </thead>
          <tbody>
            <tr><Td><RootRow text="Entities" /></Td><Td /></tr>
            {types.map((type, index) => (
              <tr key={type.text}>
                <Td><ChildRow {...type} last={index === types.length - 1} /></Td>
                <Td $pad={10}>{type.count}</Td>
              </tr>
            ))}
          </tbody>
        </Table>
      </Panel>
      <SearchGroup>
        <SearchRow>
          <SearchInput aria-label="Search" defaultValue="Search" />
          <DropButton aria-label="Search options"><Icon name="down2" size={12} /></DropButton>
        </SearchRow>
        <Panel $share={1}>
          <Table>
            <thead>
              <tr>
                <Th $width={259}><HeadCell>Names<Icon name="down2" size={12} /></HeadCell></Th>
                <Th $width={120}>Entities</Th>
                <Th>Description</Th>
              </tr>
            </thead>
            <tbody>
              <tr><Td><RootRow text="Layer" icon="dropper" current /></Td><Td /><Td /></tr>
              <tr><Td><ChildRow text="Default" bold /></Td><Td /><Td $pad={6}>Default</Td></tr>
              <tr><Td><ChildRow text="0" last /></Td><Td $pad={11}>88</Td><Td /></tr>
            </tbody>
          </Table>
        </Panel>
      </SearchGroup>
      <Panel $share={13}>
        <Table>
          <thead>
            <tr>
              <Th $width={240}><HeadCell>Names<Icon name="up2" size={12} /></HeadCell></Th>
              <Th>Entities</Th>
            </tr>
          </thead>
          <tbody>
            <tr><Td><RootRow text="Color" icon="dropper" /></Td><Td /></tr>
            {colors.map(([text, color], index) => (
              <tr key={text}><Td><ChildRow text={text} color={color} bold={index === 0} /></Td><Td /></tr>
            ))}
          </tbody>
        </Table>
        <ScrollBar>
          <ScrollButton aria-label="Scroll up"><Icon name="up2" size={12} /></ScrollButton>
          <ScrollTrack><Thumb><Icon name="grip3" size={16} /></Thumb></ScrollTrack>
          <ScrollButton $down aria-label="Scroll down"><Icon name="down2" size={12} /></ScrollButton>
        </ScrollBar>
      </Panel>
      <FoldedRow>
        <TreeCell><RootGuide /><Icon name="tag" /><TreeText>Tags</TreeText></TreeCell>
        <FoldedButton aria-label="Show tags"><Icon name="down2" size={12} /></FoldedButton>
      </FoldedRow>
      <FoldedRow>
        <TreeCell><RootGuide /><Icon name="user" /><TreeText>User defined tags</TreeText></TreeCell>
        <FoldedButton aria-label="Show user defined tags"><Icon name="down2" size={12} /></FoldedButton>
      </FoldedRow>
      <FoldedRow $last>
        <TreeCell><RootGuide end /><Icon name="db" /><TreeText>Stored filters</TreeText></TreeCell>
      </FoldedRow>
    </Panels>
  </RightDock>
)

const App = () => {
  const tool = (name, index) => name === 'bar'
    ? <Bar key={index} />
    : <ToolButton key={index} aria-label={name}><Icon name={name} size={30} /></ToolButton>

  return (
    <Page>
      <GlobalStyle />
      <TitleBar>
        <Icon name="app" />
        <WindowTitle>hyperMILL® - NOT FOR RESALE - [C:\Users\cam8\Desktop\HYPERMILL-EGITIM\2D\2.5_Eksen.hmc]</WindowTitle>
        <WindowButtons>
          <ToolButton aria-label="Minimize"><Icon name="minimize" size={22} /></ToolButton>
          <ToolButton aria-label="Restore"><Icon name="restore" size={22} /></ToolButton>
          <ToolButton aria-label="Close"><Icon name="shut" size={22} /></ToolButton>
        </WindowButtons>
      </TitleBar>
      <MenuBar>
        {menuNames.map(name => <MenuBarItem key={name}>{name}</MenuBarItem>)}
        <CommandButton>Unlock entities</CommandButton>
      </MenuBar>
      <ToolBar>
        <Grip />
        <ToolGroup $width={71} $count={2}>{['wire', 'solidCube'].map(tool)}</ToolGroup>
        <CoveredTools />
        <ToolGroup $width={187} $count={5}>{['floorCube', 'cubeLeft', 'cubeMid', 'cubeRight', 'cubeTop'].map(tool)}</ToolGroup>
        <Grip />
        <ToolGroup $width={673} $count={18}>{workplaneTools.map(tool)}</ToolGroup>
        <Grip />
        <ToolGroup $width={149} $count={4}>{['tire1', 'tire2', 'tire3', 'tire4'].map(tool)}</ToolGroup>
      </ToolBar>
      <Workspace>
        <CamDock />
        <View>
          <ViewTools $width={826} $count={19}>
            {viewTools.map(name => (
              <ViewButton key={name} aria-label={name} $off={viewToolsOff.includes(name)}><Icon name={name} size={36} /></ViewButton>
            ))}
          </ViewTools>
          <Block />
          <ViewTools $width={478} $count={11} $bottom>
            {attributeTools.map(name => (
              <ViewButton key={name} aria-label={name} $off={name === 'digits'}><Icon name={name} size={36} /></ViewButton>
            ))}
          </ViewTools>
          <UnlockDialog />
        </View>
        <VisibilityDock />
      </Workspace>
      <EditMenu />
    </Page>
  )
}

export default App
